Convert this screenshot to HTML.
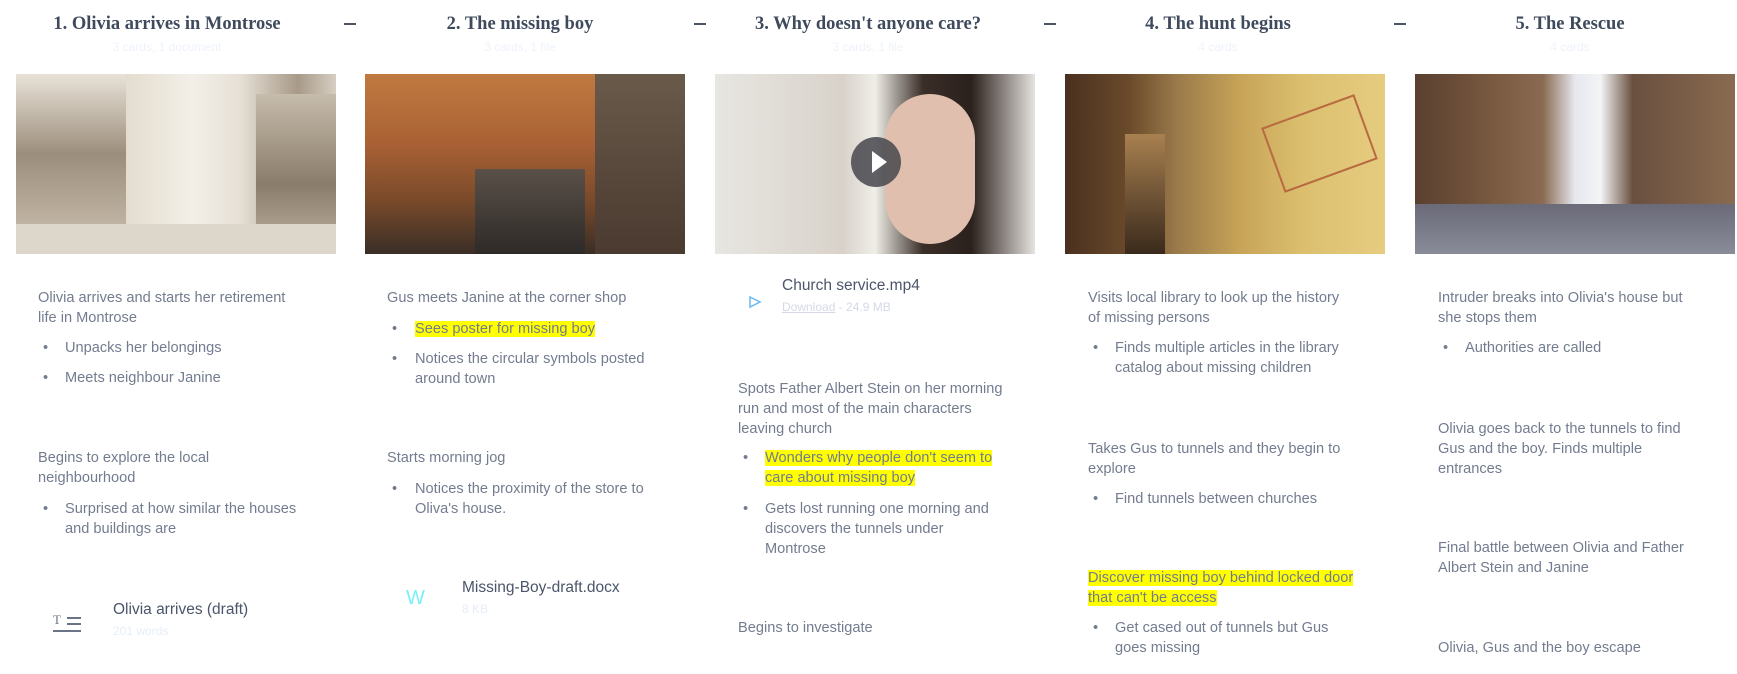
<!DOCTYPE html>
<html><head><meta charset="utf-8"><style>
body{margin:0;width:1737px;height:674px;background:#fff;position:relative;overflow:hidden;font-family:"Liberation Sans",sans-serif;}
.h{position:absolute;top:12px;width:350px;text-align:center;font-family:"Liberation Serif",serif;font-weight:bold;font-size:18.5px;color:#3f4a5c;line-height:24px}
.sub{position:absolute;top:40px;width:350px;text-align:center;font-size:12px;color:#eef3fa}
.d{position:absolute;top:14px;width:12px;height:2px;background:#4b5563}
.img{position:absolute;top:74px;width:320px;height:180px;overflow:hidden}
.t{position:absolute;font-size:14.6px;line-height:20px;color:#737c8f;white-space:nowrap}
.hl{background:#ffff00}
.ft{position:absolute;font-size:15.5px;color:#4b5569;line-height:20px}
.fs{position:absolute;font-size:12px;color:#e6edf6;line-height:16px}
</style></head><body>

<div class="h" style="left:-8px">1. Olivia arrives in Montrose</div><div class="sub" style="left:-8px">3 cards, 1 document</div>
<div class="h" style="left:345px">2. The missing boy</div><div class="sub" style="left:345px">3 cards, 1 file</div>
<div class="h" style="left:693px">3. Why doesn't anyone care?</div><div class="sub" style="left:693px">3 cards, 1 file</div>
<div class="h" style="left:1043px">4. The hunt begins</div><div class="sub" style="left:1043px">4 cards</div>
<div class="h" style="left:1395px">5. The Rescue</div><div class="sub" style="left:1395px">4 cards</div>
<div class="d" style="left:344px;top:23px"></div><div class="d" style="left:694px;top:23px"></div><div class="d" style="left:1044px;top:23px"></div><div class="d" style="left:1394px;top:23px"></div>

<div class="img" style="left:16px;background:linear-gradient(90deg,#cfc6b8 0%,#b8ac9a 15%,#e4ddd0 35%,#f3efe8 55%,#e6e0d6 70%,#a89a88 88%,#d6cec2 100%)"><div style="position:absolute;left:0;top:0;width:110px;height:160px;background:linear-gradient(180deg,#e8e2d8,#9c8e7c 50%,#c4b8a8)"></div><div style="position:absolute;left:240px;top:20px;width:80px;height:150px;background:linear-gradient(180deg,#c6bcac,#8a7c6a 60%,#b8ac9c)"></div><div style="position:absolute;left:0;top:150px;width:320px;height:30px;background:#ddd6ca"></div></div>
<div class="img" style="left:365px;background:linear-gradient(180deg,#c07a40 0%,#a86034 40%,#7a4a2a 70%,#3a2e26 100%)"><div style="position:absolute;left:110px;top:95px;width:110px;height:85px;background:linear-gradient(180deg,#5a5048,#2e2a28)"></div><div style="position:absolute;left:230px;top:0;width:90px;height:180px;background:linear-gradient(180deg,#6a5a4a,#4a3a30)"></div></div>
<div class="img" style="left:715px;background:linear-gradient(90deg,#e8e6e2 0%,#d8d2ca 40%,#f0eee8 50%,#3a2e28 65%,#2a201c 80%,#e6e4e0 100%)"><div style="position:absolute;left:170px;top:20px;width:90px;height:150px;border-radius:45px;background:#e0bfae"></div><div style="position:absolute;left:136px;top:63px;width:50px;height:50px;border-radius:50%;background:rgba(70,70,76,.85)"></div><div style="position:absolute;left:157px;top:77px;width:0;height:0;border-left:15px solid #fff;border-top:11px solid transparent;border-bottom:11px solid transparent"></div></div>
<div class="img" style="left:1065px;background:linear-gradient(90deg,#4a3020 0%,#6a4a2a 20%,#9a7a4a 35%,#c8a458 55%,#dcc070 75%,#e6cc80 100%)"><div style="position:absolute;left:205px;top:35px;width:95px;height:65px;border:2px solid #b86a40;transform:rotate(-20deg)"></div><div style="position:absolute;left:60px;top:60px;width:40px;height:120px;background:linear-gradient(180deg,#a88050,#3a2a1c)"></div></div>
<div class="img" style="left:1415px;background:linear-gradient(90deg,#5a4030 0%,#7a5a40 25%,#8a6a52 40%,#e6e8ee 50%,#f4f4f6 58%,#6a5040 68%,#8a6a50 100%)"><div style="position:absolute;left:0;top:130px;width:320px;height:50px;background:linear-gradient(180deg,#6a6a78,#8a8c9a)"></div></div>

<!-- col1 -->
<div class="t" style="left:38px;top:288px">Olivia arrives and starts her retirement<br>life in Montrose</div>
<div class="t" style="left:43px;top:338px">•</div><div class="t" style="left:65px;top:338px">Unpacks her belongings</div>
<div class="t" style="left:43px;top:368px">•</div><div class="t" style="left:65px;top:368px">Meets neighbour Janine</div>
<div class="t" style="left:38px;top:448px">Begins to explore the local<br>neighbourhood</div>
<div class="t" style="left:43px;top:499px">•</div><div class="t" style="left:65px;top:499px">Surprised at how similar the houses<br>and buildings are</div>
<div style="position:absolute;left:53px;top:614px;font-family:'Liberation Serif',serif;font-size:13px;color:#6b7387;line-height:12px">T</div>
<div style="position:absolute;left:67px;top:617px;width:14px;height:2px;background:#6b7387"></div><div style="position:absolute;left:67px;top:623px;width:14px;height:2px;background:#6b7387"></div><div style="position:absolute;left:53px;top:630px;width:28px;height:2px;background:#6b7387"></div>
<div class="ft" style="left:113px;top:600px">Olivia arrives (draft)</div><div class="fs" style="left:113px;top:623px">201 words</div>

<!-- col2 -->
<div class="t" style="left:387px;top:288px">Gus meets Janine at the corner shop</div>
<div class="t" style="left:392px;top:319px">•</div><div class="t" style="left:415px;top:319px"><span class="hl">Sees poster for missing boy</span></div>
<div class="t" style="left:392px;top:349px">•</div><div class="t" style="left:415px;top:349px">Notices the circular symbols posted<br>around town</div>
<div class="t" style="left:387px;top:448px">Starts morning jog</div>
<div class="t" style="left:392px;top:479px">•</div><div class="t" style="left:415px;top:479px">Notices the proximity of the store to<br>Oliva's house.</div>
<div style="position:absolute;left:406px;top:587px;font-size:20px;color:#7af0f8">W</div>
<div class="ft" style="left:462px;top:578px">Missing-Boy-draft.docx</div><div class="fs" style="left:462px;top:601px">8 KB</div>

<!-- col3 -->
<svg style="position:absolute;left:748px;top:295px" width="14" height="14"><path d="M2 2 L12 7 L2 12 Z" fill="none" stroke="#6ab8f0" stroke-width="1.5"/></svg>
<div class="ft" style="left:782px;top:276px">Church service.mp4</div>
<div style="position:absolute;left:782px;top:299px;font-size:12px;color:#d4d8e8;line-height:16px"><u>Download</u> - 24.9 MB</div>
<div class="t" style="left:738px;top:379px">Spots Father Albert Stein on her morning<br>run and most of the main characters<br>leaving church</div>
<div class="t" style="left:743px;top:448px">•</div><div class="t" style="left:765px;top:448px"><span class="hl">Wonders why people don't seem to</span><br><span class="hl">care about missing boy</span></div>
<div class="t" style="left:743px;top:499px">•</div><div class="t" style="left:765px;top:499px">Gets lost running one morning and<br>discovers the tunnels under<br>Montrose</div>
<div class="t" style="left:738px;top:618px">Begins to investigate</div>

<!-- col4 -->
<div class="t" style="left:1088px;top:288px">Visits local library to look up the history<br>of missing persons</div>
<div class="t" style="left:1093px;top:338px">•</div><div class="t" style="left:1115px;top:338px">Finds multiple articles in the library<br>catalog about missing children</div>
<div class="t" style="left:1088px;top:439px">Takes Gus to tunnels and they begin to<br>explore</div>
<div class="t" style="left:1093px;top:489px">•</div><div class="t" style="left:1115px;top:489px">Find tunnels between churches</div>
<div class="t" style="left:1088px;top:568px"><span class="hl">Discover missing boy behind locked door</span><br><span class="hl">that can't be access</span></div>
<div class="t" style="left:1093px;top:618px">•</div><div class="t" style="left:1115px;top:618px">Get cased out of tunnels but Gus<br>goes missing</div>

<!-- col5 -->
<div class="t" style="left:1438px;top:288px">Intruder breaks into Olivia's house but<br>she stops them</div>
<div class="t" style="left:1443px;top:338px">•</div><div class="t" style="left:1465px;top:338px">Authorities are called</div>
<div class="t" style="left:1438px;top:419px">Olivia goes back to the tunnels to find<br>Gus and the boy. Finds multiple<br>entrances</div>
<div class="t" style="left:1438px;top:538px">Final battle between Olivia and Father<br>Albert Stein and Janine</div>
<div class="t" style="left:1438px;top:638px">Olivia, Gus and the boy escape</div>
</body></html>
